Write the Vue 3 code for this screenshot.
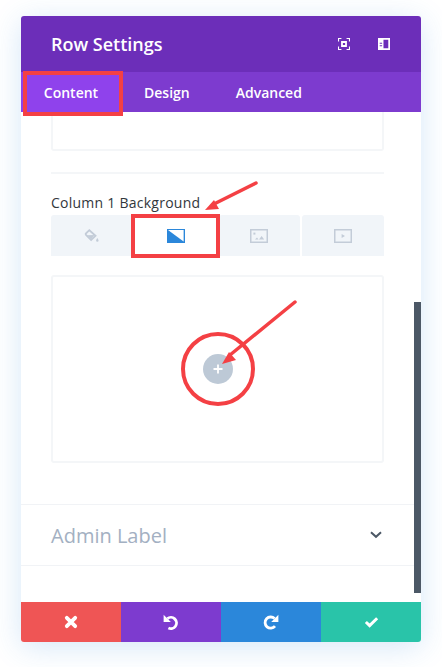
<script setup>
const tabs = ['Content', 'Design', 'Advanced']
</script>

<template>
  <div class="page">
    <div class="modal">
      <header class="head">
        <h1 class="title">Row Settings</h1>
        <div class="head-icons">
          <svg class="head-icon" viewBox="0 0 14 14">
            <path d="M0.6 4V0.6H4M10 0.6H13.4V4M13.4 10V13.4H10M4 13.4H0.6V10" fill="none" stroke="#fff" stroke-width="1.3" />
            <path fill-rule="evenodd" d="M3.6 3.6h6.8v6.8H3.6zM5.7 5.7v2.6h2.6V5.7z" fill="#fff" />
          </svg>
          <svg class="head-icon" viewBox="0 0 14 14">
            <path fill-rule="evenodd" d="M0 0h14v14H0zM6.4 2v10h5.6V2zM2 5.4v1.2h2.8V5.4zM2 8.4v1.2h2.8V8.4z" fill="#fff" />
          </svg>
        </div>
      </header>

      <nav class="tabs">
        <a v-for="(t, i) in tabs" :key="t" class="tab" :class="{ active: i === 0 }">{{ t }}</a>
      </nav>

      <div class="body">
        <div class="settings">
          <div class="old-box"></div>
          <div class="divider"></div>

          <div class="field-label">Column 1 Background</div>
          <div class="bg-tabs">
            <div class="bg-tab">
              <svg class="bg-icon" viewBox="0 0 18 18">
                <path d="M6 2.5l7 6.2-5 4.8-5.8-5.8c-.6-.6-.4-1.3.2-1.8L6 2.5z" fill="none" stroke="#c3ccd8" stroke-width="2" />
                <path d="M3.4 8.2l8.4-.2-3.8 4.4z" fill="#c3ccd8" />
                <path d="M15 11.2c.8 1.2 1.4 2 1.4 2.8a1.4 1.4 0 0 1-2.8 0c0-.8.6-1.6 1.4-2.8z" fill="#c3ccd8" />
              </svg>
            </div>
            <div class="bg-tab selected">
              <svg class="grad-icon" viewBox="0 0 18 14">
                <rect width="18" height="14" fill="#2b87da" />
                <path d="M1 1h15.6v11.4z" fill="#fff" />
              </svg>
            </div>
            <div class="bg-tab">
              <svg class="media-icon" viewBox="0 0 18 14">
                <rect x="0.75" y="0.75" width="16.5" height="12.5" fill="none" stroke="#c3ccd8" stroke-width="1.5" />
                <rect x="3.4" y="3.6" width="2" height="2" fill="#c3ccd8" />
                <path d="M5 10.5l2-2 1.5 2zM9 10.5l2.6-3.6 2.6 3.6z" fill="#c3ccd8" />
              </svg>
            </div>
            <div class="bg-tab">
              <svg class="media-icon" viewBox="0 0 18 14">
                <rect x="0.75" y="0.75" width="16.5" height="12.5" fill="none" stroke="#c3ccd8" stroke-width="1.5" />
                <path d="M7.6 5l3.4 2-3.4 2z" fill="#c3ccd8" />
              </svg>
            </div>
          </div>

          <div class="upload">
            <div class="add-btn">
              <svg viewBox="0 0 10 10" width="10" height="10">
                <path d="M5 0.5v9M0.5 5h9" stroke="#fff" stroke-width="1.8" />
              </svg>
            </div>
          </div>
        </div>

        <div class="toggle">
          <span class="toggle-title">Admin Label</span>
          <svg class="chev" viewBox="0 0 12 8">
            <path d="M1 1.2l5 4.6 5-4.6" fill="none" stroke="#4c5866" stroke-width="2" />
          </svg>
        </div>

        <div class="scrollbar"></div>
      </div>

      <footer class="actions">
        <button class="act red">
          <svg viewBox="0 0 14 14" width="14" height="14">
            <path d="M2.8 2.8l8.4 8.4M11.2 2.8l-8.4 8.4" stroke="#fff" stroke-width="3.8" stroke-linecap="round" />
          </svg>
        </button>
        <button class="act purple">
          <svg viewBox="0 0 16 16" width="16" height="16">
            <path d="M4.4 4.6A5.6 5.6 0 1 1 5.4 14" fill="none" stroke="#fff" stroke-width="2.8" />
            <path d="M0.6 0.8v7.2h7.2z" fill="#fff" />
          </svg>
        </button>
        <button class="act blue">
          <svg viewBox="0 0 16 16" width="16" height="16">
            <path d="M11.6 4.6A5.6 5.6 0 1 0 12 12.2" fill="none" stroke="#fff" stroke-width="2.8" />
            <path d="M15.4 0.8v7.2H8.2z" fill="#fff" />
          </svg>
        </button>
        <button class="act green">
          <svg viewBox="0 0 16 12" width="15" height="12">
            <path d="M2 6l4 3.8L14 2" fill="none" stroke="#fff" stroke-width="3.2" />
          </svg>
        </button>
      </footer>
    </div>

    <!-- red markup drawn on top of the screenshot -->
    <svg class="markup" viewBox="0 0 442 667" width="442" height="667">
      <rect x="25" y="73" width="96" height="41" fill="none" stroke="#f44044" stroke-width="4" />
      <rect x="133" y="216" width="85" height="40" fill="none" stroke="#f44044" stroke-width="4" />
      <circle cx="218" cy="369" r="35" fill="none" stroke="#f44044" stroke-width="4" />
      <path d="M256 183L214 204" stroke="#f44044" stroke-width="3.5" stroke-linecap="round" />
      <path d="M205 210l14-1-5-9z" fill="#f44044" />
      <path d="M295 302L230 355" stroke="#f44044" stroke-width="3.5" stroke-linecap="round" />
      <path d="M222 364l14-4-7-8z" fill="#f44044" />
    </svg>
  </div>
</template>

<style>
body {
  margin: 0;
  background: #fff;
}
</style>

<style scoped>
.page {
  position: relative;
  width: 442px;
  height: 667px;
  padding: 16px 21px 0;
  box-sizing: border-box;
  overflow: hidden;
  font-family: "Open Sans", "Noto Sans", sans-serif;
}

.modal {
  width: 400px;
  height: 626px;
  display: flex;
  flex-direction: column;
  border-radius: 3px;
  overflow: hidden;
  background: #fff;
  box-shadow: 0 5px 30px rgba(43, 135, 218, 0.2);
}

.head {
  height: 56px;
  flex: none;
  display: flex;
  align-items: center;
  justify-content: space-between;
  padding: 0 31px 0 30px;
  background: #6c2eb9;
}

.title {
  margin: 0;
  font-size: 18px;
  font-weight: 600;
  color: #fff;
}

.head-icons {
  display: flex;
  gap: 28px;
}

.head-icon {
  width: 12px;
  height: 12px;
  display: block;
}

.tabs {
  height: 40px;
  flex: none;
  display: flex;
  background: #7d3bcf;
}

.tab {
  display: flex;
  align-items: center;
  padding: 0 23px;
  font-size: 14px;
  font-weight: 600;
  color: #fff;
}

.tab.active {
  width: 100px;
  box-sizing: border-box;
  justify-content: center;
  padding: 0;
  background: #8f42ec;
}

.body {
  position: relative;
  flex: 1;
  min-height: 0;
}

.settings {
  padding: 0 37px 0 30px;
  height: 393px;
  box-sizing: border-box;
  border-bottom: 1px solid #f1f3f6;
}

.old-box {
  height: 39px;
  box-sizing: border-box;
  border: 2px solid #f4f6f8;
  border-top: none;
  border-radius: 0 0 3px 3px;
}

.divider {
  height: 2px;
  margin-top: 21px;
  background: #f4f6f8;
}

.field-label {
  margin-top: 19px;
  font-size: 14px;
  line-height: 20px;
  letter-spacing: 0.25px;
  color: #32373c;
}

.bg-tabs {
  display: grid;
  grid-template-columns: repeat(4, 1fr);
  gap: 2px;
  height: 41px;
  margin-top: 2px;
}

.bg-tab {
  display: flex;
  align-items: center;
  justify-content: center;
  background: #f1f5f9;
  border-radius: 3px 3px 0 0;
}

.bg-tab.selected {
  background: #fff;
}

.bg-icon {
  width: 16px;
  height: 16px;
}

.grad-icon,
.media-icon {
  width: 18px;
  height: 14px;
}

.upload {
  height: 188px;
  margin-top: 19px;
  box-sizing: border-box;
  display: flex;
  align-items: center;
  justify-content: center;
  border: 2px solid #f4f6f8;
  border-radius: 3px;
}

.add-btn {
  width: 30px;
  height: 30px;
  display: flex;
  align-items: center;
  justify-content: center;
  border-radius: 50%;
  background: #bdc9d6;
}

.toggle {
  height: 60px;
  display: flex;
  align-items: center;
  justify-content: space-between;
  padding: 0 39px 0 30px;
  border-bottom: 1px solid #f1f3f6;
}

.toggle-title {
  font-size: 20px;
  color: #a3b0c2;
}

.chev {
  width: 12px;
  height: 8px;
}

.scrollbar {
  position: absolute;
  top: 190px;
  right: 0;
  width: 7px;
  height: 291px;
  background: #4c5866;
}

.actions {
  height: 40px;
  flex: none;
  display: grid;
  grid-template-columns: repeat(4, 1fr);
}

.act {
  border: none;
  padding: 0;
  display: flex;
  align-items: center;
  justify-content: center;
}

.red {
  background: #ef5555;
}

.purple {
  background: #7d3bcf;
}

.blue {
  background: #2b87da;
}

.green {
  background: #29c4a9;
}

.markup {
  position: absolute;
  top: 0;
  left: 0;
  pointer-events: none;
}
</style>
